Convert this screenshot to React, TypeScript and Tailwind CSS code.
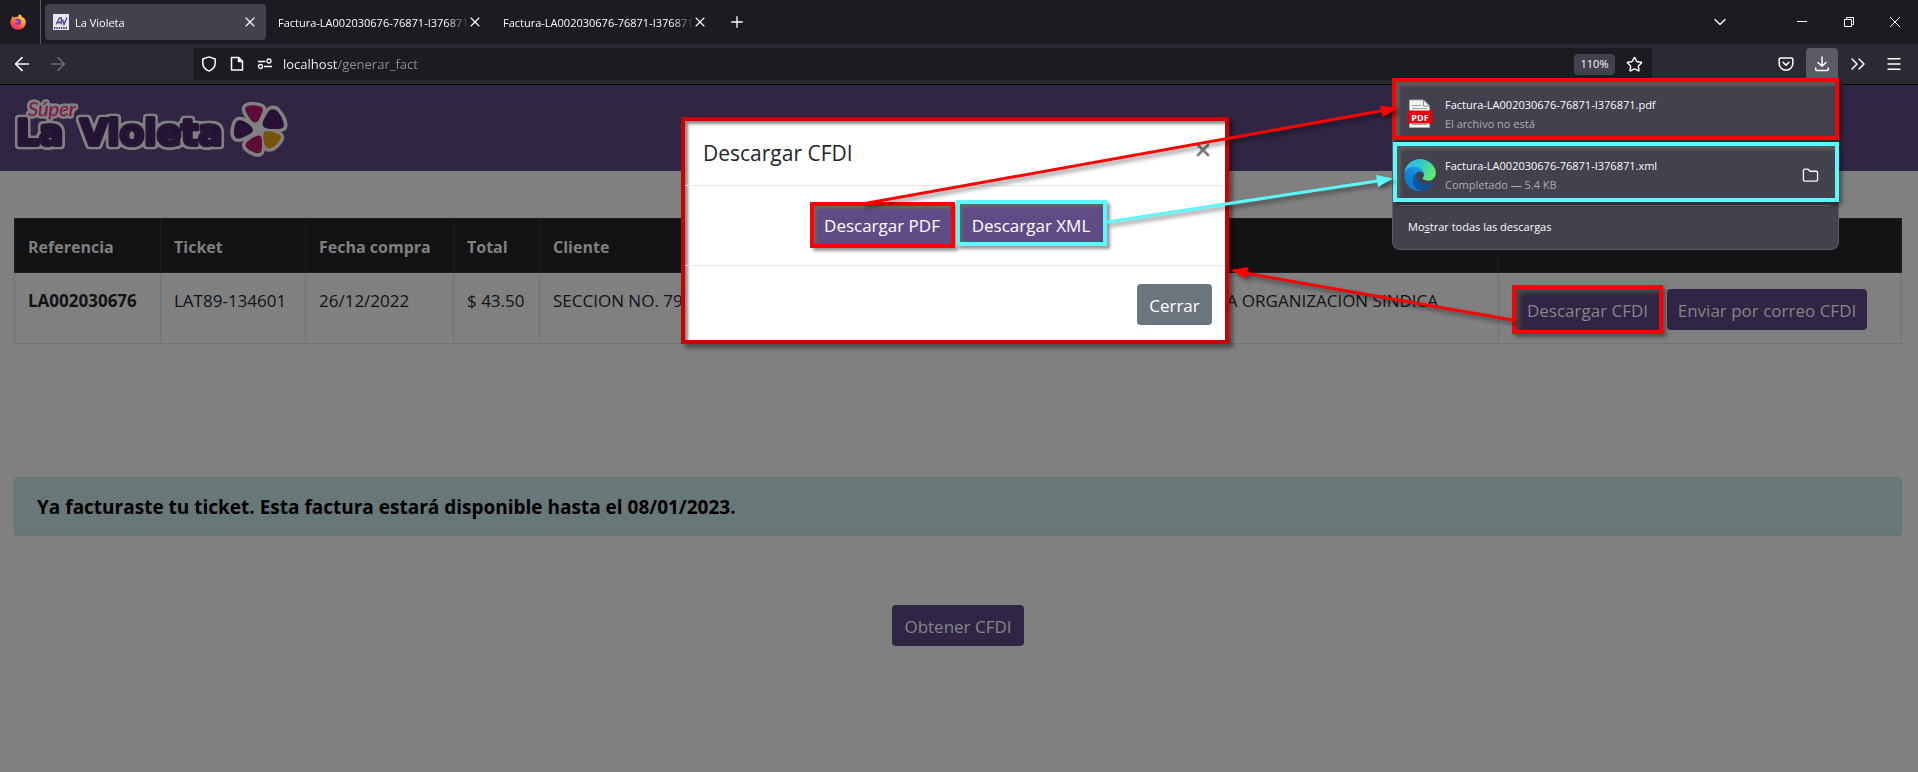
import React from "react";
import { ArrowLeft, ArrowRight, ChevronDown, ChevronsRight, Folder, Menu, Plus, Star, X } from "lucide-react";

const tabs = [
  { id: 1, title: "La Violeta", active: true },
  { id: 2, title: "Factura-LA002030676-76871-I376871", active: false },
  { id: 3, title: "Factura-LA002030676-76871-I376871", active: false },
];

function FirefoxLogo() {
  return (
    <svg viewBox="0 0 16 16" className="size-4">
      <defs>
        <linearGradient id="fx" x1="0.8" y1="0" x2="0.2" y2="1">
          <stop offset="0" stopColor="#fff04a" />
          <stop offset="0.4" stopColor="#ff9a22" />
          <stop offset="0.75" stopColor="#ff3f52" />
          <stop offset="1" stopColor="#e0208c" />
        </linearGradient>
      </defs>
      <path
        fill="url(#fx)"
        d="M9.6.2c1.400.7 2 1.700 2.100 2.900 1.200.3 2.300.9 3 2 .8 1.200 1.100 2.400 1 3.700-.2 4-3.500 7-7.700 7S.4 12.700.3 8.800C.2 6.900 1 5 2.100 3.600c0-.7.2-1.300.6-1.700.3.7.8 1.200 1.500 1.500C5.500 2.700 6.700 2.600 8 3c.2-1.200.7-2.100 1.600-2.800z"
      />
      <path fill="#7a3ff0" d="M5 5.300c1.500-1.200 4.700-.9 5.800.9 1.100 1.900.4 4.800-2.500 4.900-2 0-3.400-1.200-3.300-2.800l2.600.1c.7-.6.3-1.200-.5-1.400-.9 0-1.600-.5-2.100-1.700z" />
    </svg>
  );
}

function EdgeLogo() {
  return (
    <svg viewBox="4 0 257 259" className="size-8">
      <defs>
        <linearGradient id="e1" x1="0.2" x2="1" y1="0.6" y2="0.7">
          <stop offset="0" stopColor="#0c59a4" />
          <stop offset="1" stopColor="#114a8b" />
        </linearGradient>
        <linearGradient id="e2" x1="0.7" x2="0.3" y1="0.1" y2="1">
          <stop offset="0" stopColor="#1b9de2" />
          <stop offset="0.5" stopColor="#0f7fd8" />
          <stop offset="1" stopColor="#0a78d4" />
        </linearGradient>
        <linearGradient id="e3" x1="0" x2="1" y1="0.25" y2="0.6">
          <stop offset="0" stopColor="#2fb6ee" />
          <stop offset="0.5" stopColor="#36cbc4" />
          <stop offset="1" stopColor="#66eb6e" />
        </linearGradient>
      </defs>
      <path fill="url(#e1)" d="M235.680 195.460a93.730 93.730 0 0 1-10.540 4.710 101.870 101.870 0 0 1-35.900 6.460c-47.320 0-88.540-32.550-88.540-74.320A31.480 31.480 0 0 1 117.130 104.800c-42.800 1.800-53.800 46.400-53.800 72.530 0 73.880 68.090 81.370 82.760 81.370 7.910 0 19.840-2.300 27-4.560l1.310-.440A128.340 128.340 0 0 0 241 201.100a4 4 0 0 0-5.320-5.640Z" />
      <path fill="url(#e2)" d="M110.340 246.340A79.200 79.200 0 0 1 87.600 225a80.720 80.720 0 0 1 29.530-120.100c3.120-1.470 8.450-4.130 15.540-4a32.350 32.350 0 0 1 25.690 13 31.880 31.880 0 0 1 6.360 18.660c0-.210 24.460-79.600-80-79.600-43.900 0-80 41.660-80 78.210a130.150 130.150 0 0 0 12.110 56 128 128 0 0 0 156.380 67.110 75.550 75.550 0 0 1-62.780-8Z" />
      <path fill="url(#e3)" d="M156.940 153.780c-.810 1.050-3.300 2.500-3.300 5.660 0 2.610 1.700 5.120 4.720 7.230 14.380 10 41.490 8.680 41.560 8.680a59.560 59.560 0 0 0 30.270-8.350 61.380 61.380 0 0 0 30.430-52.880c.260-22.410-8-37.310-11.340-43.910C228.090 28.760 182.350.2 132.610.2A128 128 0 0 0 4.620 126.410c.480-36.540 36.800-66.050 80-66.050 3.500 0 23.460.340 42 10.070 16.340 8.580 24.900 18.940 30.850 29.210 6.180 10.670 7.280 24.150 7.280 29.520s-2.740 13.330-7.800 19.620Z" />
    </svg>
  );
}

function PdfIcon() {
  return (
    <svg viewBox="0 0 26 30" className="h-[30px] w-[26px]">
      <path d="M2.500 1h14l6 6v21.500h-20z" fill="#f4f4f4" stroke="#a8a8a8" />
      <path d="M16.500 1v6h6z" fill="#fff" stroke="#8c8c8c" />
      <path d="M5 6.500h9M5 9.500h15M5 25.500h15" stroke="#a0a0a0" />
      <rect x="0.500" y="11.500" width="25" height="13" fill="#e5000f" />
      <text x="13" y="21.500" textAnchor="middle" fontSize="9" fontWeight="700" fill="#fff" fontFamily="Open Sans, sans-serif">
        PDF
      </text>
    </svg>
  );
}

const petals = [
  { fill: "#5e0c39", d: "M246 22c4-2.500 12-2 16 .5 2 1.500.5 4-.5 6.500-1.500 4-3 8-6 8.500-3 .4-6-4-8-7.500-1.500-3-3.500-6.500-1.500-8z" },
  { fill: "#271236", d: "M270 25c3-1.500 6-.5 8 2 3.500 4 6 10 6 13.500 0 3-4 3.500-8 3.500-5 .2-11 0-13-3-1.500-3 1-7 3-10.500 1-2 2.500-4.500 4-5.500z" },
  { fill: "#79530b", d: "M264 47c2-2 7-.8 10.500.5 3.500 1.200 6.500 2.500 6.300 5-.2 2.500-2.500 5-5 7.500-2 2-5 3.800-8 3-2.500-.8-4-5-4.300-9-.2-2.500-.5-5.500.5-7z" },
  { fill: "#5e0c39", d: "M259 50.500c2.500 0 3 3 3 7 0 4 .3 8-1.500 10-2 1.500-6 .5-9-1.200-3-1.500-6-3.800-6-6.300 0-2.500 4-5 7-7 2-1.300 4.500-2.500 6.500-2.500z" },
  { fill: "#271236", d: "M238 35.500c3-1 6 .5 9 2.500 3 2.200 6 4.500 6 7 0 3-4 4.500-8 6.500-3 1.500-7 3-9 1.500-2.500-2-2.500-7-1.500-11 .7-3 1.500-5.700 3.500-6.500z" },
];

function BrandLogo() {
  return (
    <svg viewBox="0 0 292 86" className="h-[86px] w-[292px]" role="img" aria-label="Súper La Violeta">
      <defs>
        <filter id="halo" x="-10%" y="-20%" width="120%" height="140%">
          <feMorphology in="SourceAlpha" operator="dilate" radius="1" result="fat" />
          <feGaussianBlur in="fat" stdDeviation="1.100" result="soft" />
          <feComponentTransfer in="soft" result="mask">
            <feFuncA type="linear" slope="10" intercept="-0.500" />
          </feComponentTransfer>
          <feFlood floodColor="#808080" />
          <feComposite in2="mask" operator="in" result="ring" />
          <feMerge>
            <feMergeNode in="ring" />
            <feMergeNode in="SourceGraphic" />
          </feMerge>
        </filter>
      </defs>
      <g filter="url(#halo)" fill="#271236" stroke="#271236" strokeWidth="4" strokeLinejoin="round" fontFamily="DejaVu Sans" fontWeight="700" fontSize="36">
        <text x="16" y="60">La</text>
        <text x="80" y="60">Violeta</text>
      </g>
      <g filter="url(#halo)" fill="#7d0f49" stroke="#7d0f49" strokeWidth="0.500" fontFamily="Lato" fontStyle="italic" fontSize="20">
        <text x="28" y="31">Súper</text>
      </g>
      <g stroke="#808080" strokeLinejoin="round" fill="#808080">
        {petals.map((p, i) => (
          <path key={i} d={p.d} strokeWidth="7" />
        ))}
        <circle cx="258" cy="44" r="6" />
      </g>
      {petals.map((p, i) => (
        <path key={i} d={p.d} fill={p.fill} />
      ))}
    </svg>
  );
}

function TabStrip() {
  return (
    <div className="flex h-11 items-center bg-[#1c1b22] text-[11px] text-[#fbfbfe]">
      <div className="flex h-11 w-[41px] items-center border-r border-[#5b5b66] pl-2.5">
        <FirefoxLogo />
      </div>
      <div className="flex pl-0.5">
        {tabs.map((t) => (
          <div key={t.id} className="w-[225px] px-0.5">
            <div className={t.active ? "flex h-9 items-center rounded bg-[#42414d] px-2" : "flex h-9 items-center px-2"}>
              {t.active && (
                <svg viewBox="0 0 16 16" className="mr-1.5 size-4 shrink-0">
                  <rect width="16" height="16" fill="#e9e7ee" />
                  <path d="M3 10.500 6.500 4h1.800v6.500M4.500 8.500h3.500M9.500 5.500l1.500 5L14 3.500" fill="none" stroke="#4b3d8f" strokeWidth="1.300" />
                  <path d="M1 14h13" stroke="#5a4a90" strokeWidth="2" strokeDasharray="1.500 .8" />
                </svg>
              )}
              <a href="#" className="min-w-0 flex-1 pt-0.5 whitespace-nowrap mask-[linear-gradient(90deg,#000_168px,transparent_192px)]">
                {t.title}
              </a>
              <button aria-label="Cerrar pestaña" className="flex w-4 shrink-0 justify-center">
                <X className="size-4" strokeWidth={1.6} />
              </button>
            </div>
          </div>
        ))}
      </div>
      <button aria-label="Nueva pestaña" className="ml-[10px]">
        <Plus className="size-[18px]" strokeWidth={1.8} />
      </button>
      <div className="ml-auto flex items-center">
        <button aria-label="Listar pestañas" className="mr-[66px]"><ChevronDown className="size-5" strokeWidth={1.6} /></button>
        <button aria-label="Minimizar" className="flex w-[47px] justify-start">
          <svg viewBox="0 0 12 12" className="size-3"><path d="M1 5.500h10" stroke="#fff" /></svg>
        </button>
        <button aria-label="Restaurar" className="flex w-[46px] justify-start">
          <svg viewBox="0 0 12 12" className="size-3"><path d="M1.500 3.500h7v7h-7zM3.500 3.500v-2h7v7h-2" fill="none" stroke="#fff" /></svg>
        </button>
        <button aria-label="Cerrar" className="mr-[17px]">
          <svg viewBox="0 0 12 12" className="size-3"><path d="M1 1l10 10M11 1L1 11" stroke="#fff" /></svg>
        </button>
      </div>
    </div>
  );
}

function DownloadsPanel() {
  return (
    <div className="absolute top-[34px] right-[79px] z-30 w-[447px] rounded-b-lg border border-[#5b5b66] border-t-0 bg-[#42414d] text-[11px] text-[#fbfbfe]">
      <div className="-mx-px flex h-[62px] items-center gap-3 border-4 border-[#ff0000] pt-2.5 pl-[11px] shadow-[3px_3px_4px_#0006,inset_4px_4px_3px_#5a5b5c]">
        <PdfIcon />
        <div className="leading-[19px]">
          <p>Factura-LA002030676-76871-I376871.pdf</p>
          <p className="text-[#adacb3]">El archivo no está</p>
        </div>
      </div>
      <div className="-mr-px mt-0.5 flex h-[60px] items-center gap-[9px] border-4 border-[#5cf9fc] pt-1.5 pr-4 pl-[7px] shadow-[3px_3px_4px_#0006,inset_4px_4px_3px_#5a5b5c]">
        <EdgeLogo />
        <div className="flex-1 leading-[19px]">
          <p>Factura-LA002030676-76871-I376871.xml</p>
          <p className="text-[#adacb3]">Completado — 5.4 KB</p>
        </div>
        <button aria-label="Abrir carpeta"><Folder className="size-[17px]" strokeWidth={1.9} /></button>
      </div>
      <div className="mx-2 mt-[3px] border-t border-[#5b5b66]" />
      <a href="#" className="flex h-[43px] items-center pl-[15px]">
        <span>Mo<span className="underline">s</span>trar todas las descargas</span>
      </a>
    </div>
  );
}

function Toolbar() {
  return (
    <div className="relative flex h-[41px] items-start border-b border-black bg-[#2b2a33] pt-1 text-[#fbfbfe]">
      <div className="flex h-8 w-[193px] items-center gap-3.5 pl-[11px]">
        <button aria-label="Atrás"><ArrowLeft className="size-[22px]" strokeWidth={1.7} /></button>
        <button aria-label="Adelante" className="text-[#6d6c74]"><ArrowRight className="size-[22px]" strokeWidth={1.7} /></button>
      </div>
      <div className="flex h-8 flex-1 items-center rounded bg-[#1c1b22] px-2">
        <svg viewBox="0 0 16 16" className="size-4" fill="none" stroke="currentColor" strokeWidth="1.500" strokeLinejoin="round">
          <path d="M8 .9 14.200 3v4c0 3.500-2.500 6.700-6.200 8.100C4.300 13.700 1.800 10.500 1.800 7V3z" />
        </svg>
        <svg viewBox="0 0 16 16" className="ml-3 size-4" fill="none" stroke="currentColor" strokeWidth="1.500" strokeLinejoin="round">
          <path d="M2.500 1.500h7l4 4v8.500h-11z" /><path d="M9.500 1.500v4h4z" fill="currentColor" />
        </svg>
        <svg viewBox="0 0 16 16" className="ml-3 size-4" fill="none" stroke="currentColor" strokeWidth="1.300">
          <path d="M1 5.500h7.500M7 10.500h8" /><circle cx="12" cy="5" r="2" /><circle cx="3.500" cy="10.500" r="2" />
        </svg>
        <input
          aria-label="Dirección"
          readOnly
          value="localhost/generar_fact"
          className="ml-2.5 min-w-0 flex-1 bg-[linear-gradient(90deg,#fbfbfe_54px,#8f8f98_54px)] bg-clip-text pt-0.5 text-[13px] text-transparent outline-none"
        />
        <button className="h-[21px] w-[41px] rounded bg-[#42414d] text-[11px]">110%</button>
        <button aria-label="Añadir a marcadores" className="mr-px ml-[11px]"><Star className="size-[17px]" strokeWidth={2} /></button>
      </div>
      <div className="flex h-8 w-[266px] items-center justify-end pr-[15px]">
        <button aria-label="Pocket">
          <svg viewBox="0 0 16 16" className="size-4" fill="none" stroke="currentColor" strokeWidth="1.500" strokeLinecap="round" strokeLinejoin="round">
            <path d="M2.500 2h11a1.300 1.300 0 0 1 1.300 1.300V7.500a6.800 6.800 0 0 1-13.600 0V3.300A1.300 1.300 0 0 1 2.500 2z" /><path d="m5 6.200 3 2.900 3-2.900" />
          </svg>
        </button>
        <button aria-label="Descargas" className="ml-3 flex size-8 items-center justify-center rounded-t bg-[#5b5b66]">
          <svg viewBox="0 0 16 16" className="size-4" fill="none" stroke="currentColor" strokeWidth="1.500" strokeLinecap="round" strokeLinejoin="round">
            <path d="M8 1v9M4 6.500 8 10.300l4-3.800M1.700 12v1.300c0 .7.500 1.200 1.200 1.200h10.200c.7 0 1.200-.5 1.200-1.200V12" />
          </svg>
        </button>
        <button aria-label="Más herramientas" className="ml-2"><ChevronsRight className="size-6" strokeWidth={1.5} /></button>
        <button aria-label="Menú" className="ml-[15px]"><Menu className="size-[18px]" strokeWidth={1.8} /></button>
      </div>
      <DownloadsPanel />
    </div>
  );
}

function InvoiceTable() {
  const th = "border border-[#1b1d20] px-[13px] pt-3.5 pb-3 text-left text-base font-bold";
  const td = "border border-[#6f7172] px-[13px] pt-3.5 align-top";
  const btn = "h-[41px] bg-[#302544] pt-0.5 text-[#858585]";
  return (
    <table className="w-full table-fixed border-collapse text-[17px] leading-7 text-[#111315]">
      <colgroup>
        <col className="w-[146px]" /><col className="w-[145px]" /><col className="w-[148px]" /><col className="w-[86px]" /><col /><col className="w-[403px]" />
      </colgroup>
      <thead className="bg-[#111315] text-[#808080]">
        <tr className="h-[54px]">
          <th className={th}>Referencia</th><th className={th}>Ticket</th><th className={th}>Fecha compra</th><th className={th}>Total</th><th className={th}>Cliente</th>
          <th className={th} aria-label="Acciones" />
        </tr>
      </thead>
      <tbody>
        <tr className="h-[71px]">
          <th className={td + " text-left font-bold"}>LA002030676</th>
          <td className={td}>LAT89-134601</td>
          <td className={td}>26/12/2022</td>
          <td className={td}>$ 43.50</td>
          <td className={td}>
            <div className="flex justify-between pr-[47px] whitespace-nowrap"><span>SECCION NO. 79</span><span>A ORGANIZACION SINDICA</span></div>
          </td>
          <td className={td}>
            <div className="flex gap-2 pt-0.5 pl-1">
              <button className={btn + " w-[143px] shadow-[3px_3px_4px_4px_#0006,inset_4px_4px_4px_#4a4a4a] outline-4 outline-[#ff0000]"}>Descargar CFDI</button>
              <button className={btn + " w-[200px] rounded"}>Enviar por correo CFDI</button>
            </div>
          </td>
        </tr>
      </tbody>
    </table>
  );
}

function DownloadDialog() {
  return (
    <div className="absolute inset-x-0 top-8 z-20 flex justify-center pr-2">
      <div role="dialog" aria-labelledby="dlg" className="w-[548px] border-4 border-[#cc0000] bg-white text-[17px] shadow-[4px_4px_4px_#0006,inset_3px_3px_3px_#8a8a8a]">
        <div className="flex h-[65px] items-start justify-between border-b border-[#e6e8ea] pt-4 pr-3 pl-[18px]">
          <h5 id="dlg" className="text-[21px] leading-8 text-[#212529]">Descargar CFDI</h5>
          <button aria-label="Cerrar ventana" className="mt-[3px] text-[#7f7f7f]"><X className="size-5" strokeWidth={3.4} /></button>
        </div>
        <div className="flex h-20 items-start justify-center gap-px border-b border-[#e6e8ea] pt-3.5 pl-[6px] text-white">
          <button className="mt-0.5 h-[46px] w-[145px] border-4 border-[#ff0000] bg-[#5f4c87] pt-0.5 shadow-[3px_3px_3px_#0006,inset_3px_3px_3px_#666]">Descargar PDF</button>
          <button className="h-[46px] w-[151px] border-4 border-[#5cf9fc] bg-[#5f4c87] pt-1.5 shadow-[3px_3px_3px_#0006,inset_3px_3px_3px_#666]">Descargar XML</button>
        </div>
        <div className="flex h-[74px] items-start justify-end pt-[18px] pr-[13px]">
          <button className="h-[41px] w-[75px] rounded bg-[#6c757d] pt-0.5 text-white">Cerrar</button>
        </div>
      </div>
    </div>
  );
}

function Arrows() {
  return (
    <svg className="pointer-events-none absolute top-0 left-0 z-40 h-[772px] w-full drop-shadow-[3px_3px_2px_#0007]" fill="none" strokeWidth="3">
      <path d="M862 204 1386 110" stroke="#ff0000" />
      <path d="M1398 108 1380 105.500 1382.500 117z" fill="#ff0000" />
      <path d="M1107 222 1384 180" stroke="#5cf9fc" />
      <path d="M1393 178.500 1376 175 1378 187z" fill="#5cf9fc" />
      <path d="M1515 320.500 1242 272.500" stroke="#ff0000" />
      <path d="M1230 270 1248.500 267 1246 278.500z" fill="#ff0000" />
    </svg>
  );
}

export default function App() {
  return (
    <div className="relative min-h-screen overflow-hidden bg-[#808080] font-['Open_Sans','Noto_Sans',sans-serif]">
      <TabStrip />
      <Toolbar />
      <main className="relative">
        <header className="h-[86px] bg-[#302644]"><BrandLogo /></header>
        <div className="px-4 pt-[47px] pl-3.5">
          <InvoiceTable />
          <div className="mt-[133px] flex h-[59px] items-center rounded border border-[#5f7377] bg-[#687777] px-[22px] pt-0.5 text-[19px] font-bold text-black">
            Ya facturaste tu ticket. Esta factura estará disponible hasta el 08/01/2023.
          </div>
          <div className="mt-[69px] flex justify-center">
            <button className="h-[41px] w-[132px] rounded bg-[#302544] pt-0.5 text-[17px] text-[#858585]">Obtener CFDI</button>
          </div>
        </div>
        <DownloadDialog />
      </main>
      <Arrows />
    </div>
  );
}
